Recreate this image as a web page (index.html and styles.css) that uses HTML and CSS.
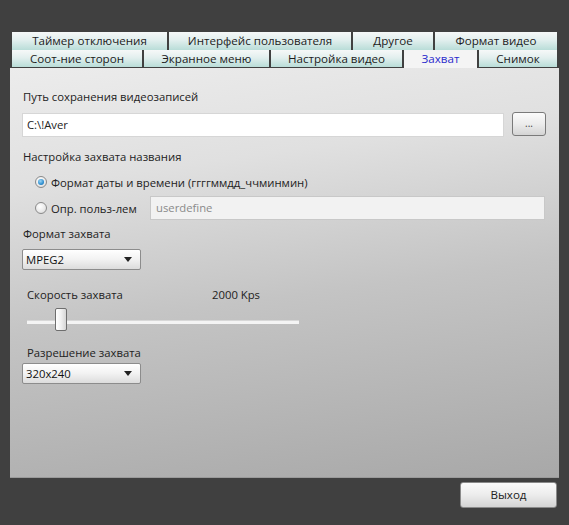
FILE: index.html
```html
<!DOCTYPE html>
<html lang="ru">
<head>
<meta charset="utf-8">
<title>Захват</title>
<link rel="stylesheet" href="styles.css">
</head>
<body>
<div class="window">
  <div class="tabrow">
    <div class="tab w155">Таймер отключения</div>
    <div class="tab w182">Интерфейс пользователя</div>
    <div class="tab w81">Другое</div>
    <div class="tab grow">Формат видео</div>
  </div>
  <div class="tabrow">
    <div class="tab w130">Соот-ние сторон</div>
    <div class="tab w125">Экранное меню</div>
    <div class="tab w131">Настройка видео</div>
    <div class="tab active w73">Захват</div>
    <div class="tab grow">Снимок</div>
  </div>
  <div class="panel">
    <div class="label first">Путь сохранения видеозаписей</div>
    <div class="pathrow">
      <div class="textbox path">C:\!Aver</div>
      <div class="btn small">...</div>
    </div>
    <div class="label l2">Настройка захвата названия</div>
    <div class="radiorow r1">
      <span class="radio checked"></span>
      <span class="rtext">Формат даты и времени (ггггммдд_ччминмин)</span>
    </div>
    <div class="radiorow r2">
      <span class="radio"></span>
      <span class="rtext fixed">Опр. польз-лем</span>
      <div class="textbox user">userdefine</div>
    </div>
    <div class="label l3">Формат захвата</div>
    <div class="select s1"><span>MPEG2</span><span class="arrow"></span></div>
    <div class="speedrow">
      <span class="speedlabel">Скорость захвата</span>
      <span class="speedval">2000 Kps</span>
    </div>
    <div class="slider">
      <div class="track"></div>
      <div class="thumb"></div>
    </div>
    <div class="label l4">Разрешение захвата</div>
    <div class="select s2"><span>320x240</span><span class="arrow"></span></div>
  </div>
  <div class="footer">
    <div class="btn exit">Выход</div>
  </div>
</div>
</body>
</html>
```
FILE: styles.css
```css
html, body {
  margin: 0;
  padding: 0;
  background: #404040;
  width: 569px;
  height: 525px;
  overflow: hidden;
}
body {
  font-family: "Open Sans", "Noto Sans", sans-serif;
  font-size: 11.3px;
  color: #222;
}
.window {
  padding: 32px 0 0 10px;
  width: 549px;
}
.tabrow {
  display: flex;
  gap: 2px;
  margin-left: 2px;
  width: 545px;
  height: 18px;
}
.tabrow + .tabrow {
  height: 17px;
  margin-bottom: 1px;
}
.tab {
  box-sizing: border-box;
  background: linear-gradient(#f6f8f8 0%, #e2efee 45%, #b9ddd8 100%);
  text-align: center;
  line-height: 17px;
  font-size: 11.6px;
  color: #1c1c1c;
  white-space: nowrap;
}
.tab.active {
  background: #f4f4f4;
  color: #2a2acc;
  margin-bottom: -1px;
  position: relative;
}
.w155 { width: 155px; }
.w182 { width: 182px; }
.w81 { width: 80px; }
.w130 { width: 130px; }
.w125 { width: 125px; }
.w131 { width: 131px; }
.w73 { width: 73px; }
.grow { flex: 1; }
.panel {
  box-sizing: border-box;
  width: 549px;
  height: 410px;
  background: linear-gradient(172deg, #ececec 0%, #e0e0e0 25%, #c4c4c4 55%, #a8a8a8 100%);
  padding: 21px 13px 0 12px;
  display: flex;
  flex-direction: column;
  align-items: flex-start;
  border-bottom: 1px solid #9a9a9a;
}
.label {
  line-height: 16px;
  height: 16px;
  padding-left: 1px;
}
.pathrow {
  display: flex;
  gap: 8px;
  margin-top: 8px;
  align-items: flex-start;
}
.textbox {
  box-sizing: border-box;
  background: #fff;
  border: 1px solid #d6d6d6;
  height: 24px;
  line-height: 22px;
  padding-left: 4px;
}
.path {
  width: 482px;
}
.btn {
  box-sizing: border-box;
  background: linear-gradient(#fbfbfb 0%, #ececec 50%, #d4d4d4 100%);
  border: 1px solid #7a7a7a;
  border-radius: 3px;
  text-align: center;
  color: #222;
}
.btn.small {
  width: 34px;
  height: 24px;
  line-height: 20px;
  margin-top: -1px;
  font-size: 10px;
  color: #444;
}
.l2 { margin-top: 12px; }
.radiorow {
  display: flex;
  align-items: center;
  padding-left: 13px;
}
.r1 { margin-top: 9px; height: 16px; }
.r2 { margin-top: 6px; height: 24px; width: 510px; }
.radio {
  box-sizing: border-box;
  width: 12px;
  height: 12px;
  border-radius: 50%;
  border: 1px solid #8a8a8a;
  background: radial-gradient(circle at 40% 35%, #ffffff 0%, #e8e8e8 60%, #cfcfcf 100%);
  margin-right: 4px;
  flex: none;
  position: relative;
}
.radio.checked::after {
  content: "";
  position: absolute;
  left: 2px;
  top: 2px;
  width: 6px;
  height: 6px;
  border-radius: 50%;
  background: radial-gradient(circle at 40% 35%, #9ad4f4 0%, #2f8fd0 60%, #1c5f9c 100%);
}
.rtext { white-space: nowrap; }
.rtext.fixed { width: 99px; }
.user {
  flex: 1;
  background: #f2f2f2;
  color: #8a8a8a;
  border-color: #c8c8c8;
  padding-left: 5px;
}
.l3 { margin-top: 6px; }
.select {
  box-sizing: border-box;
  width: 119px;
  height: 21px;
  border: 1px solid #8c8c8c;
  border-radius: 2px;
  background: linear-gradient(#ffffff 0%, #f2f2f2 50%, #dcdcdc 100%);
  display: flex;
  align-items: center;
  justify-content: space-between;
  padding: 0 8px 0 3px;
  line-height: 19px;
  color: #111;
}
.arrow {
  width: 0;
  height: 0;
  border-left: 4px solid transparent;
  border-right: 4px solid transparent;
  border-top: 5px solid #222;
}
.s1 { margin-top: 7px; }
.speedrow {
  margin-top: 17px;
  padding-left: 5px;
  display: flex;
  line-height: 16px;
  height: 16px;
}
.speedlabel { width: 185px; }
.slider {
  margin-top: 4px;
  margin-left: 5px;
  width: 272px;
  height: 26px;
  position: relative;
}
.track {
  position: absolute;
  left: 0;
  right: 0;
  top: 13px;
  height: 3px;
  background: #f4f4f4;
  border-top: 1px solid #d8d8d8;
}
.thumb {
  box-sizing: border-box;
  position: absolute;
  left: 28px;
  top: 1px;
  width: 12px;
  height: 23px;
  border: 1px solid #6e6e6e;
  border-radius: 2px;
  background: linear-gradient(90deg, #ffffff 0%, #f0f0f0 50%, #d6d6d6 100%);
}
.l4 { margin-top: 12px; padding-left: 5px; }
.s2 { margin-top: 2px; }
.footer {
  display: flex;
  justify-content: flex-end;
  padding-top: 4px;
  padding-right: 2px;
}
.btn.exit {
  width: 97px;
  height: 26px;
  line-height: 24px;
  font-size: 11.6px;
  border-color: #8a8a8a;
}
```
